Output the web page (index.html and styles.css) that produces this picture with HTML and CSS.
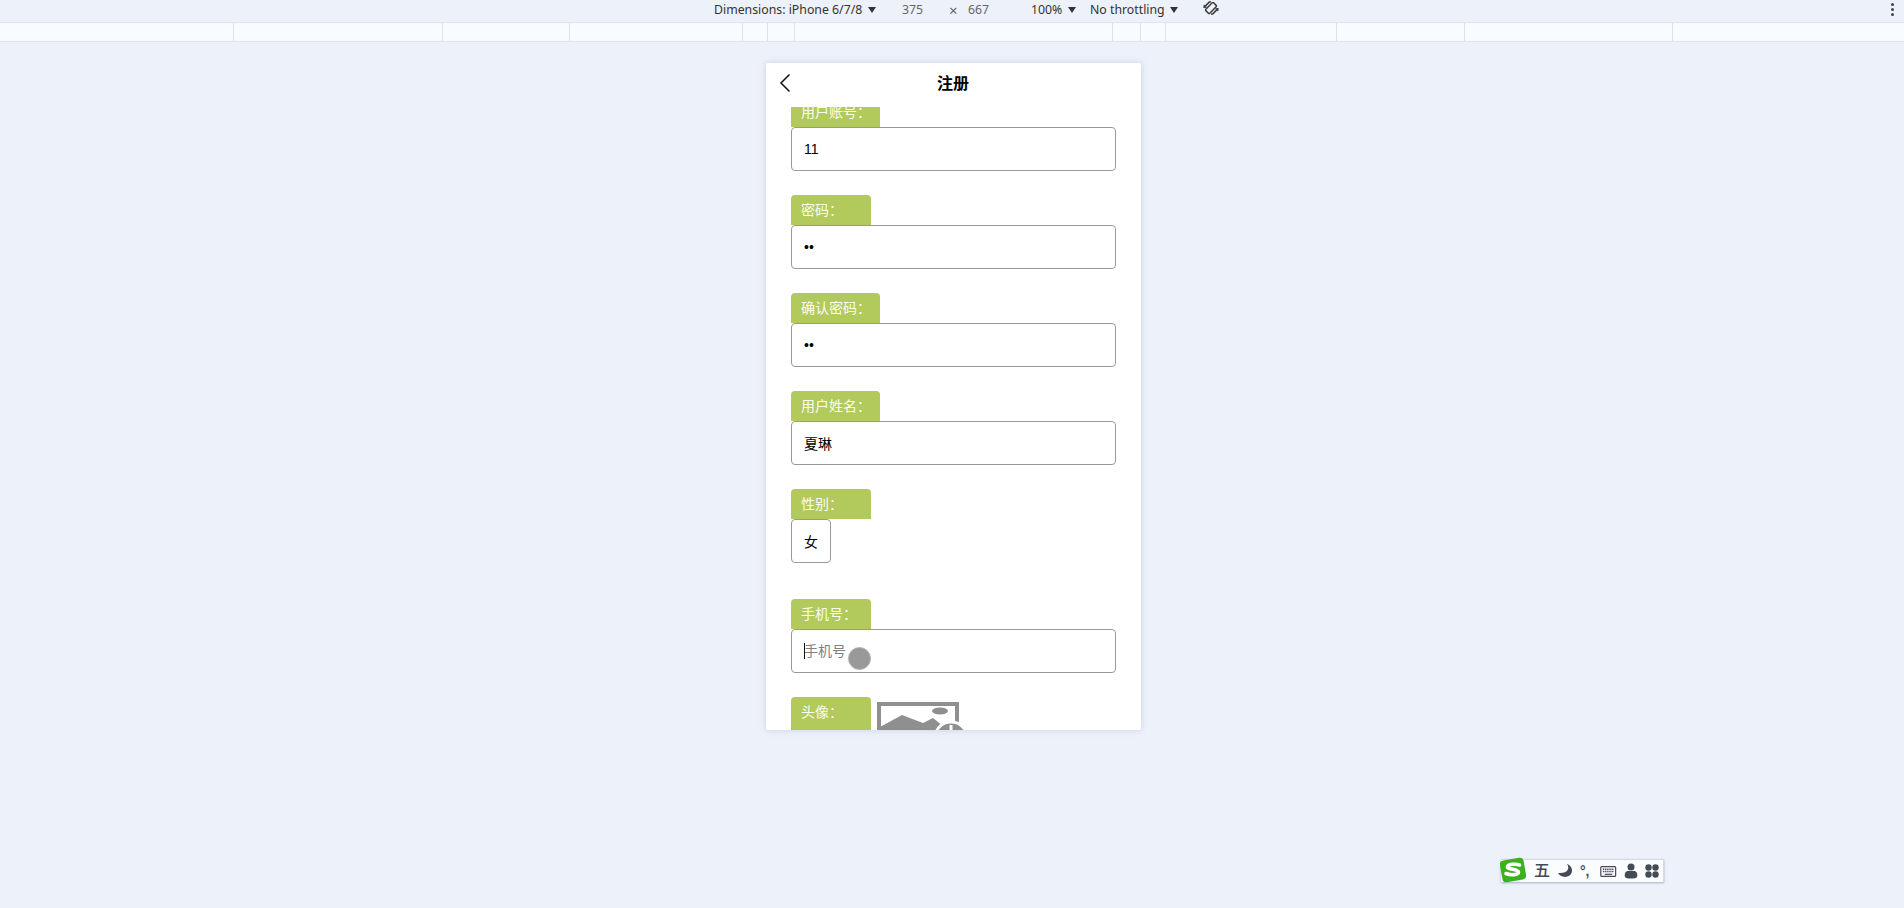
FILE: index.html
```html
<!DOCTYPE html>
<html lang="zh-CN">
<head>
<meta charset="utf-8">
<title>注册</title>
<link rel="stylesheet" href="styles.css">
</head>
<body>
<header class="toolbar">
  <span class="tb-item tb-dim">Dimensions: iPhone 6/7/8 <i class="tri"></i></span>
  <span class="tb-item tb-w">375</span>
  <span class="tb-item tb-x">×</span>
  <span class="tb-item tb-h">667</span>
  <span class="tb-item tb-zoom">100% <i class="tri"></i></span>
  <span class="tb-item tb-net">No throttling <i class="tri"></i></span>
  <svg class="tb-rotate" viewBox="0 0 16 16" width="16" height="16"><g fill="none" stroke="#3c3c3c" transform="rotate(45 8 8)"><rect x="5.200" y="2.500" width="5.600" height="11" rx="1" stroke-width="1.500"/><path d="M2.600 12V5.500a2 2 0 0 1 1-1.600M13.400 4v6.500a2 2 0 0 1-1 1.600" stroke-width="1.600"/><path d="M1 10.500l1.600 2 1.600-2M11.800 5.500l1.600-2 1.600 2" stroke-width="1.200"/></g></svg>
  <span class="tb-more"><i></i><i></i><i></i></span>
</header>
<div class="ruler">
  <span class="seg s1"></span><span class="seg s2"></span><span class="seg s3"></span><span class="seg s4"></span><span class="seg s5"></span><span class="seg s6"></span><span class="seg s7"></span><span class="seg s8"></span><span class="seg s9"></span><span class="seg s10"></span><span class="seg s11"></span><span class="seg s12"></span><span class="seg s13"></span>
</div>
<main class="stage">
  <section class="phone">
    <div class="nav">
      <svg class="back" viewBox="0 0 12 20" width="12" height="20"><path d="M10.500 1.500 2 10l8.500 8.500" fill="none" stroke="#111" stroke-width="1.500"/></svg>
      <h1 class="title">注册</h1>
    </div>
    <div class="scroller">
      <form class="form">
        <div class="field">
          <label class="tag tag-wide">用户账号：</label>
          <input class="ipt" type="text" value="11">
        </div>
        <div class="field">
          <label class="tag">密码：</label>
          <input class="ipt" type="password" value="11">
        </div>
        <div class="field">
          <label class="tag tag-wide">确认密码：</label>
          <input class="ipt" type="password" value="11">
        </div>
        <div class="field">
          <label class="tag tag-wide">用户姓名：</label>
          <input class="ipt" type="text" value="夏琳">
        </div>
        <div class="field field-sex">
          <label class="tag">性别：</label>
          <div class="sex">女</div>
        </div>
        <div class="field">
          <label class="tag">手机号：</label>
          <div class="ipt-wrap">
            <input class="ipt" type="text" placeholder="手机号">
            <i class="caret"></i>
            <i class="touch"></i>
          </div>
        </div>
        <div class="field field-avatar">
          <label class="tag">头像：</label>
          <svg class="pic" viewBox="0 0 90 60" width="90" height="60">
            <path d="M2 40V2h78v20" fill="none" stroke="#8f8f8f" stroke-width="4"/>
            <ellipse cx="63" cy="9" rx="8" ry="3.500" fill="#8f8f8f"/>
            <path d="M3 25 25 13l21 8 10-5 10 8v16H3z" fill="#8f8f8f"/>
            <ellipse cx="74" cy="33" rx="15" ry="13" fill="#8f8f8f" stroke="#fff" stroke-width="3"/>
            <path d="M74 23v20M63 30h22" stroke="#fff" stroke-width="3"/>
          </svg>
        </div>
      </form>
    </div>
  </section>
</main>
<aside class="ime">
  <span class="ime-logo">
    <svg viewBox="0 0 26 28" width="26" height="30"><rect x="1" y="3" width="24" height="22" rx="4" fill="#3cb01e" transform="rotate(-10 13 14)"/><path d="M19.500 9c-2.500-1-11-1.500-12 1.500s11 2.500 11 5.500-8 3.500-12.500 1.500" fill="none" stroke="#fff" stroke-width="3.600" stroke-linecap="round"/></svg>
  </span>
  <span class="ime-char">五</span>
  <svg class="ime-ic" viewBox="0 0 16 16" width="16" height="16"><path d="M10 1c3 4 1 10-9 9 2 5 13 6 14-2 .4-3-2-6-5-7z" fill="#454a57"/></svg>
  <span class="ime-punc">°,</span>
  <svg class="ime-ic" viewBox="0 0 18 14" width="17" height="13"><rect x=".7" y="1.700" width="16" height="10.500" rx="1" fill="none" stroke="#454a57" stroke-width="1.300"/><path d="M3 4.500h12M3 7h12" stroke="#454a57" stroke-width="1.500" stroke-dasharray="1.500 .8"/><path d="M5 10h8" stroke="#454a57" stroke-width="1.300"/></svg>
  <svg class="ime-ic" viewBox="0 0 14 16" width="14" height="16"><circle cx="7" cy="4" r="3.500" fill="#454a57"/><path d="M1 14c-1-4 1-6 3-6h6c2 0 4 2 3 6-1 2-11 2-12 0z" fill="#454a57"/></svg>
  <svg class="ime-ic" viewBox="0 0 14 14" width="14" height="14"><g fill="#454a57"><circle cx="3.500" cy="3.500" r="3.200"/><circle cx="10.500" cy="3.500" r="3.200"/><circle cx="3.500" cy="10.500" r="3.200"/><circle cx="10.500" cy="10.500" r="3.200"/></g></svg>
</aside>
</body>
</html>
```
FILE: styles.css
```css
* { box-sizing: border-box; }
html, body { margin: 0; height: 100%; }
body {
  background: #edf1fa;
  font-family: "Liberation Sans", "Noto Sans CJK SC", sans-serif;
  overflow: hidden;
  display: flex;
  flex-direction: column;
}
.toolbar {
  height: 22px;
  display: flex;
  align-items: center;
  font-family: "Noto Sans", "Noto Sans CJK SC", sans-serif;
  font-size: 12.300px;
  color: #333;
  padding: 0 0 3px 714px;
  flex: none;
}
.tb-item { white-space: nowrap; line-height: 16px; }
.tb-dim { width: 188px; }
.tb-w { width: 46px; color: #666; }
.tb-x { width: 20px; color: #666; font-size: 15px; padding-left: 1px; }
.tb-h { width: 63px; color: #666; }
.tb-zoom { width: 59px; }
.tb-net { width: 113px; }
.tri {
  display: inline-block;
  border: 4px solid transparent;
  border-top: 6px solid #333;
  border-bottom: 0;
  margin-left: 2px;
  vertical-align: 1px;
}
.tb-rotate { flex: none; margin-top: -3px; }
.tb-more {
  margin-left: auto;
  margin-right: 10px;
  display: flex;
  flex-direction: column;
  gap: 2px;
}
.tb-more i { width: 3px; height: 3px; border-radius: 50%; background: #444; }
.ruler {
  height: 20px;
  display: flex;
  flex: none;
  background: #f8fbff;
  border-top: 1px solid #dfe3ee;
  border-bottom: 1px solid #dfe3ee;
}
.seg { height: 18px; border-right: 1px solid #dde1ec; flex: none; }
.s1 { width: 234px; }
.s2 { width: 209px; }
.s3 { width: 127px; }
.s4 { width: 173px; }
.s5 { width: 25px; }
.s6 { width: 27px; }
.s7 { width: 318px; }
.s8 { width: 28px; }
.s9 { width: 25px; }
.s10 { width: 171px; }
.s11 { width: 128px; }
.s12 { width: 208px; }
.s13 { flex: 1; border-right: 0; }
.stage {
  flex: 1;
  padding: 21px 0 0 766px;
}
.phone {
  width: 375px;
  height: 667px;
  background: #fff;
  box-shadow: 0 0 6px rgba(170, 180, 205, .55);
  display: flex;
  flex-direction: column;
  border-radius: 2px;
}
.nav {
  height: 44px;
  flex: none;
  display: flex;
  align-items: center;
  justify-content: center;
  position: relative;
}
.back { position: absolute; left: 13px; top: 10px; }
.title { margin: -2px 0 0 -1px; font-size: 16px; font-weight: 700; color: #000; line-height: 42px; }
.scroller { flex: 1; overflow: hidden; }
.form { margin-top: -10px; padding-left: 25px; display: flex; flex-direction: column; gap: 24px; }
.field { width: 325px; }
.field-sex { padding-bottom: 12px; }
.field-avatar { display: flex; align-items: flex-start; }
.tag {
  display: block;
  width: 80px;
  height: 30px;
  padding-left: 10px;
  font-size: 14px;
  line-height: 30px;
  color: #fbfdf2;
  background: #b2ca5c;
  border-radius: 4px 4px 0 0;
  white-space: nowrap;
}
.tag-wide { width: 89px; }
.field-avatar .tag { flex: none; border-radius: 4px; height: 40px; }
.ipt-wrap { position: relative; }
.ipt {
  display: block;
  width: 325px;
  height: 44px;
  padding: 0 12px;
  border: 1px solid #999;
  border-radius: 4px;
  font-family: "Liberation Sans", "Noto Sans CJK SC", sans-serif;
  font-size: 14px;
  color: #000;
  background: #fff;
  outline: 0;
}
.ipt::placeholder { color: #808080; opacity: 1; }
.sex {
  width: 40px;
  height: 44px;
  border: 1px solid #999;
  border-radius: 4px;
  display: flex;
  align-items: center;
  justify-content: center;
  font-size: 14px;
  color: #000;
}
.caret { position: absolute; left: 13px; top: 14px; width: 1px; height: 16px; background: #111; }
.touch {
  position: absolute;
  left: 57px;
  top: 18px;
  width: 23px;
  height: 23px;
  border-radius: 50%;
  background: #999;
  border: 1px solid #b5b5b5;
}
.pic { flex: none; margin: 5px 0 0 6px; }
.ime {
  position: absolute;
  left: 1501px;
  top: 859px;
  width: 163px;
  height: 23px;
  background: #fbfcfe;
  border-top: 1px solid #d5d9e4;
  border-right: 1px solid #d5d9e4;
  box-shadow: 0 1px 2px rgba(120, 130, 160, .6);
  display: flex;
  align-items: center;
  padding-left: 33px;
  gap: 7px;
  color: #454a57;
}
.ime-logo { position: absolute; left: -1px; top: -5px; line-height: 0; }
.ime-char { font-size: 16px; line-height: 1; font-weight: 500; }
.ime-punc { font-size: 14px; font-weight: 700; width: 13px; line-height: 1; }
.ime-ic { flex: none; }
```
